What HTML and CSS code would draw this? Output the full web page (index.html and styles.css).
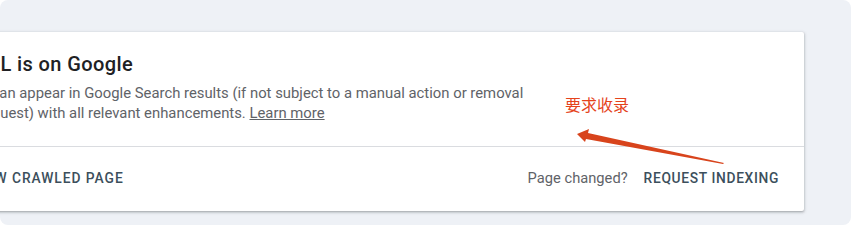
FILE: index.html
```html
<!DOCTYPE html>
<html>
<head>
<meta charset="utf-8">
<link rel="stylesheet" href="styles.css">
</head>
<body>
<div class="canvas">
  <div class="card">
    <div class="card-body">
      <h2 class="title">URL is on Google</h2>
      <p class="desc">It can appear in Google Search results (if not subject to a manual action or removal request) with all relevant enhancements. <a class="link" href="#">Learn more</a></p>
    </div>
    <div class="card-footer">
      <button class="btn btn-left">View crawled page</button>
      <div class="right-actions">
        <span class="hint">Page changed?</span>
        <button class="btn">Request indexing</button>
      </div>
    </div>
  </div>
  <div class="note">要求收录</div>
  <svg class="arrow" width="160" height="40" viewBox="0 0 160 40">
    <polygon points="0,5 12,0 11,4 147,34 146,35 9,10 8,13" fill="#d8441c"/>
  </svg>
</div>
</body>
</html>
```
FILE: styles.css
```css
html, body {
  margin: 0;
  padding: 0;
  background: #ffffff;
}
body {
  font-family: Roboto, "Noto Sans CJK SC", sans-serif;
  width: 857px;
  height: 225px;
  overflow: hidden;
}
.canvas {
  position: relative;
  width: 851px;
  height: 225px;
  background: #eef1f6;
  border-radius: 8px;
  padding-top: 32px;
  box-sizing: border-box;
  overflow: hidden;
}
.card {
  margin-left: -43px;
  width: 847px;
  background: #fff;
  border-radius: 2px;
  box-shadow: 0 1px 2px rgba(60,64,67,.3), 0 1px 3px 1px rgba(60,64,67,.15);
}
.card-body {
  padding: 20px 24px 23px 22px;
  border-bottom: 1px solid #dadce0;
}
.title {
  margin: 0 0 7px -5px;
  font-size: 20px;
  line-height: 24px;
  font-weight: 500;
  letter-spacing: 0.4px;
  color: #202124;
}
.desc {
  margin: 0;
  width: 560px;
  font-size: 14.85px;
  line-height: 20px;
  color: #5f6368;
}
.link {
  color: #5f6368;
  text-decoration: underline;
}
.card-footer {
  display: flex;
  align-items: center;
  justify-content: space-between;
  height: 64px;
  padding: 0 17px 2px 5px;
  box-sizing: border-box;
}
.right-actions {
  display: flex;
  align-items: center;
  gap: 8px;
}
.btn {
  font-family: Roboto, sans-serif;
  background: none;
  border: none;
  padding: 8px 8px;
  font-size: 13.8px;
  font-weight: 500;
  letter-spacing: 0.65px;
  text-transform: uppercase;
  color: #3c4f5c;
}
.btn-left {
  letter-spacing: 0.95px;
  margin-left: 1px;
}
.hint {
  font-size: 14.7px;
  color: #5f6368;
}
.note {
  position: absolute;
  left: 565px;
  top: 96px;
  font-size: 16px;
  line-height: 20px;
  color: #e5431c;
}
.arrow {
  position: absolute;
  left: 577px;
  top: 129px;
}
```
